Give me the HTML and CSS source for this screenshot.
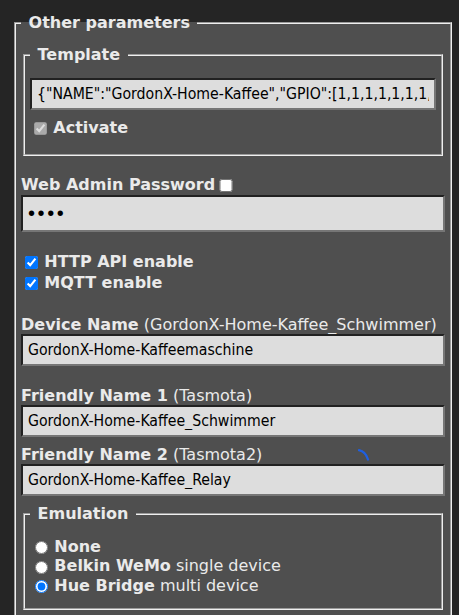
FILE: index.html
```html
<!DOCTYPE html>
<html lang="de">
<head>
<meta charset="utf-8">
<title>Other parameters</title>
<link rel="stylesheet" href="styles.css">
</head>
<body>
<div class="page">
  <fieldset class="group">
    <legend class="legend"><b>&nbsp;Other parameters&nbsp;</b></legend>
    <form class="form">
      <p class="para"></p>
      <fieldset class="group">
        <legend class="legend"><b>&nbsp;Template&nbsp;</b></legend>
        <p class="para"><input class="field" value='{"NAME":"GordonX-Home-Kaffee","GPIO":[1,1,1,1,1,1,1,1,1,1,1,1,1,1],"FLAG":0,"BASE":18}'></p>
        <p class="para para-tail"><label><input class="tick tick-mid" type="checkbox" checked disabled><b>Activate</b></label></p>
      </fieldset>
      <br>
      <label><b>Web Admin Password</b><input class="tick tick-low" type="checkbox"></label><br>
      <input class="field secret" type="password" value="1234"><br>
      <br>
      <label><input class="tick" type="checkbox" checked><b>HTTP API enable</b></label><br>
      <label><input class="tick" type="checkbox" checked><b>MQTT enable</b></label><br>
      <br>
      <label><b>Device Name</b> (GordonX-Home-Kaffee_Schwimmer)</label><br>
      <input class="field" value="GordonX-Home-Kaffeemaschine"><br>
      <br>
      <label><b>Friendly Name 1</b> (Tasmota)</label><br>
      <input class="field" value="GordonX-Home-Kaffee_Schwimmer">
      <p class="para"></p>
      <div class="spin-wrap">
        <label><b>Friendly Name 2</b> (Tasmota2)</label>
        <svg class="spinner" width="12" height="12" viewBox="0 0 12 12"><path d="M1 1.2 Q7.5 2.5 10 10.5" fill="none" stroke="#1f5fe0" stroke-width="2.3" stroke-linecap="round"/></svg>
      </div>
      <input class="field" value="GordonX-Home-Kaffee_Relay">
      <p class="para"></p>
      <fieldset class="group">
        <legend class="legend"><b>&nbsp;Emulation&nbsp;</b></legend>
        <p class="para">
          <label><input class="dot" type="radio" name="emu"><b>None</b></label><br>
          <label><input class="dot" type="radio" name="emu"><b>Belkin WeMo</b> single device</label><br>
          <label><input class="dot" type="radio" name="emu" checked><b>Hue Bridge</b> multi device</label><br>
        </p>
      </fieldset>
    </form>
  </fieldset>
</div>
</body>
</html>
```

FILE: styles.css
```css
html, body {
  margin: 0;
}
body {
  background: #252525;
  font-family: "DejaVu Sans", Verdana, sans-serif;
  font-size: 16px;
  line-height: 19.44px;
  color: #eaeaea;
  overflow: hidden;
}
.page {
  padding: 13px 5px 0 12px;
}
.group {
  background: #4f4f4f;
  padding: 5px;
  margin: 0 2px;
  font-size: 1em;
}
.legend {
  padding: 0 2px;
}
.form {
  margin: 0;
}
.para {
  margin: 0.5em 0;
}
.para-tail {
  margin-bottom: 10px;
}
.field {
  display: inline-block;
  width: 100%;
  box-sizing: border-box;
  padding: 5px;
  margin: 0;
  background: #dddddd;
  color: #000000;
  font-family: "DejaVu Sans Condensed", "DejaVu Sans", sans-serif;
  font-stretch: condensed;
  font-size: 15.7px;
  line-height: 18px;
}
.secret {
  font-family: "Liberation Sans", Arial, sans-serif;
  font-stretch: normal;
  font-size: 20px;
  line-height: 19px;
  letter-spacing: 2.6px;
}
.tick {
  width: 1em;
  margin: 3px 6px 4.75px 4px;
  vertical-align: -2px;
}
.tick-mid {
  margin-bottom: 3.95px;
}
.tick-low {
  margin-bottom: 3px;
}
.dot {
  width: 1em;
  margin: 3px 6px 0 5px;
  vertical-align: -2.5px;
}
.spin-wrap {
  position: relative;
}
.spinner {
  position: absolute;
  left: 337px;
  top: 4px;
}
```
